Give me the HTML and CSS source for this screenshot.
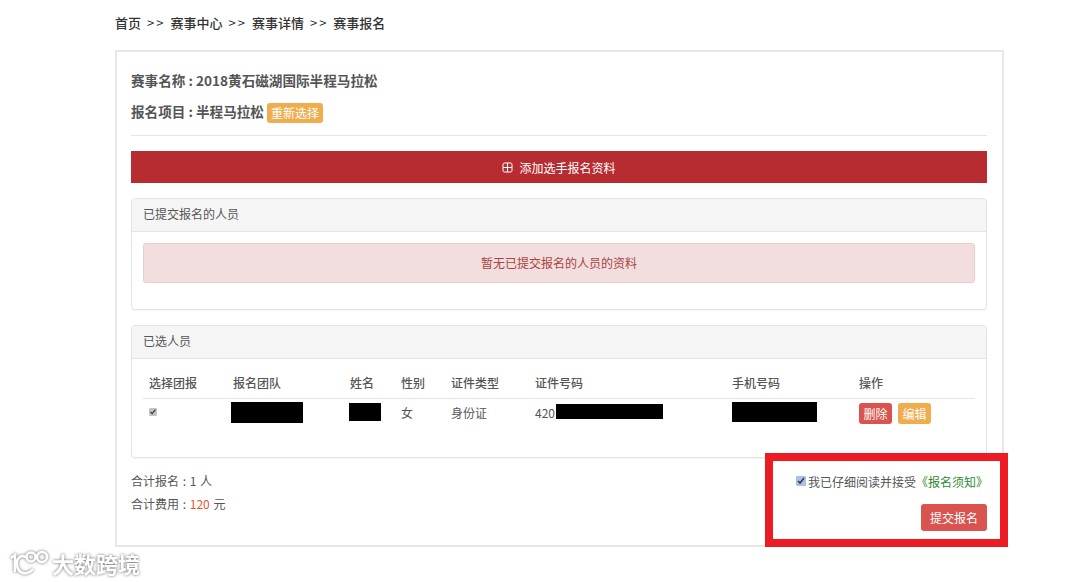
FILE: index.html
```html
<!DOCTYPE html>
<html lang="zh-CN">
<head>
<meta charset="utf-8">
<title>赛事报名</title>
<link rel="stylesheet" href="styles.css">
</head>
<body>
<div class="page">
  <nav class="crumbs">首页<span class="sep">&gt;&gt;</span>赛事中心<span class="sep">&gt;&gt;</span>赛事详情<span class="sep">&gt;&gt;</span>赛事报名</nav>
  <main class="card">
    <div class="info">赛事名称 : 2018黄石磁湖国际半程马拉松</div>
    <div class="info info-second">报名项目 : 半程马拉松 <span class="btn btn-orange btn-reselect">重新选择</span></div>
    <hr class="rule">
    <div class="add-bar">
      <svg class="add-icon" width="11" height="11" viewBox="0 0 11 11" fill="none" stroke="#fff" stroke-width="1"><rect x="1" y="1" width="9" height="9" rx="1.5"/><path d="M1 5.5H10M5.5 1V10"/></svg>
      <span>添加选手报名资料</span>
    </div>
    <section class="panel panel-submitted">
      <div class="panel-head">已提交报名的人员</div>
      <div class="panel-body">
        <div class="alert">暂无已提交报名的人员的资料</div>
      </div>
    </section>
    <section class="panel panel-selected">
      <div class="panel-head">已选人员</div>
      <div class="panel-body">
        <table class="people">
          <colgroup>
            <col class="c1"><col class="c2"><col class="c3"><col class="c4"><col class="c5"><col class="c6"><col class="c7"><col class="c8">
          </colgroup>
          <thead>
            <tr><th>选择团报</th><th>报名团队</th><th>姓名</th><th>性别</th><th>证件类型</th><th>证件号码</th><th>手机号码</th><th>操作</th></tr>
          </thead>
          <tbody>
            <tr>
              <td><input class="row-check" type="checkbox" checked></td>
              <td><span class="mask mask-team"></span></td>
              <td><span class="mask mask-name"></span></td>
              <td>女</td>
              <td>身份证</td>
              <td><span class="id-cell">420<span class="mask mask-id"></span></span></td>
              <td><span class="mask mask-phone"></span></td>
              <td><span class="actions"><span class="btn btn-red">删除</span><span class="btn btn-orange">编辑</span></span></td>
            </tr>
          </tbody>
        </table>
      </div>
    </section>
    <div class="footer">
      <div class="totals">
        <div>合计报名 : 1 人</div>
        <div class="fee">合计费用 : <span class="price">120</span> 元</div>
      </div>
      <div class="confirm">
        <label class="agree"><input class="agree-check" type="checkbox" checked>我已仔细阅读并接受<span class="notice">《报名须知》</span></label>
        <span class="btn-submit">提交报名</span>
      </div>
    </div>
    <div class="highlight"></div>
  </main>
</div>
<div class="watermark">
  <svg width="39" height="26" viewBox="0 0 39 26" fill="none" stroke="#fff" stroke-width="2.6"><path d="M1 8 L5 5 V22"/><path d="M18 8 C10 3 6 9 7 15 C8 24 17 26 23 19"/><circle cx="21" cy="7" r="4.5"/><circle cx="32" cy="7" r="5"/></svg>
  <span>大数跨境</span>
</div>
</body>
</html>
```
FILE: styles.css
```css
* { box-sizing: border-box; }
html, body { margin: 0; padding: 0; background: #fff; }
body {
  width: 1080px;
  height: 582px;
  overflow: hidden;
  position: relative;
  font-family: "Noto Sans CJK SC", "Liberation Sans", sans-serif;
  font-size: 12px;
  color: #555;
}
.page { padding: 13px 76px 0 115px; }
.crumbs { height: 20px; line-height: 20px; font-size: 13px; color: #333; font-weight: 500; }
.sep { margin: 0 5px 0 6px; letter-spacing: 2px; font-weight: 400; }
.card {
  position: relative;
  margin-top: 17px;
  width: 889px;
  height: 497px;
  padding: 16px 15px 0 14px;
  border: 2px solid #e7e7e7;
}
.info { height: 24px; line-height: 24px; font-size: 13.6px; font-weight: 700; color: #555; }
.info-second { margin-top: 7px; display: flex; align-items: center; gap: 3px; }
.btn {
  display: inline-block;
  border-radius: 3px;
  color: #fff;
  font-size: 12px;
  font-weight: 400;
  line-height: 20px;
  height: 20px;
  padding: 0 4px;
}
.btn-orange { background: #f0ad4e; }
.btn-red { background: #d9534f; }
.btn-reselect { margin-top: 3px; }
.rule { margin: 12px 0 15px; border: 0; border-top: 1px solid #e5e5e5; }
.add-bar {
  height: 32px;
  background: #b72c31;
  color: #fff;
  display: flex;
  align-items: center;
  justify-content: center;
  gap: 6px;
}
.panel {
  width: 856px;
  border: 1px solid #e4e4e4;
  border-radius: 4px;
  box-shadow: 0 1px 1px rgba(0, 0, 0, .05);
}
.panel-submitted { margin-top: 15px; height: 112px; }
.panel-selected { margin-top: 15px; height: 133px; }
.panel-head {
  height: 33px;
  line-height: 30px;
  padding-left: 11px;
  background: #f5f5f5;
  border-bottom: 1px solid #e4e4e4;
  border-radius: 3px 3px 0 0;
}
.panel-body { padding: 11px 11px 0; }
.alert {
  height: 40px;
  line-height: 38px;
  text-align: center;
  background: #f2dede;
  border: 1px solid #ebccd1;
  border-radius: 3px;
  color: #a94442;
}
.panel-selected .panel-body { padding-top: 9px; }
.people { width: 832px; table-layout: fixed; border-collapse: collapse; }
.c1 { width: 84px; } .c2 { width: 117px; } .c3 { width: 51px; } .c4 { width: 50px; }
.c5 { width: 84px; } .c6 { width: 197px; } .c7 { width: 127px; } .c8 { width: 122px; }
.people th {
  height: 30px;
  padding: 0 6px;
  text-align: left;
  font-weight: 500;
  color: #555;
  border-bottom: 1px solid #e5e5e5;
}
.people td { height: 28px; padding: 0 6px; vertical-align: middle; }
.row-check { display: block; width: 8px; height: 8px; margin: 0; accent-color: #c4c4c4; }
.mask { display: block; background: #000; }
.mask-team { width: 72px; height: 21px; margin-left: -2px; }
.mask-name { width: 32px; height: 18px; margin-left: -1px; }
.mask-id { display: inline-block; width: 107px; height: 15px; margin-left: 1px; margin-top: -2px; }
.id-cell { display: flex; align-items: center; }
.mask-phone { width: 85px; height: 20px; margin-top: -1px; }
.actions { display: flex; gap: 6px; margin-top: 3px; }
.actions .btn { width: 33px; height: 21px; line-height: 21px; padding: 0; text-align: center; }
.footer {
  display: flex;
  justify-content: space-between;
  padding-top: 11px;
}
.totals { line-height: 24px; word-spacing: 1px; }
.fee { margin-top: -1px; }
.price { color: #e4572e; }
.confirm { display: flex; flex-direction: column; align-items: flex-end; padding-top: 2px; }
.agree { display: flex; align-items: center; height: 20px; margin-right: -1px; }
.agree-check { width: 10px; height: 10px; margin: 0 2px 0 0; accent-color: #a9c0ea; }
.notice { color: #2e8b2e; }
.btn-submit {
  margin-top: 13px;
  width: 66px;
  height: 27px;
  line-height: 27px;
  text-align: center;
  border-radius: 3px;
  background: #d9534f;
  color: #fff;
}
.highlight {
  position: absolute;
  left: 648px;
  top: 401px;
  width: 243px;
  height: 94px;
  border: 8px solid #ed1c24;
}
.watermark {
  position: absolute;
  left: 10px;
  top: 549px;
  display: flex;
  align-items: center;
  gap: 3px;
  color: #fff;
  font-size: 22px;
  font-weight: 700;
  line-height: 28px;
  filter: drop-shadow(0 0 1.5px #666);
}
```
